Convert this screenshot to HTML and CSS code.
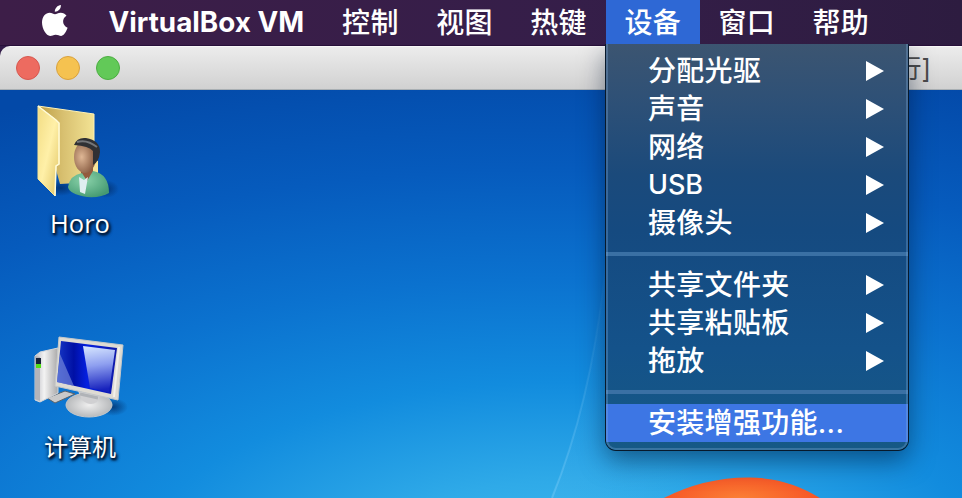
FILE: index.html
```html
<!DOCTYPE html>
<html lang="zh-CN">
<head>
<meta charset="utf-8">
<title>VirtualBox VM</title>
<link rel="stylesheet" href="styles.css">
</head>
<body>
<div class="screen">
  <nav class="menubar">
    <svg class="apple" width="28" height="34" viewBox="0 0 28 34" aria-hidden="true">
      <path d="M19.900 1c.2 3.800-2.600 6.600-6.100 6.700C13.700 4.300 16.500 1.300 19.900 1z"/>
      <path d="M14 10.200c1.500 0 3.100-1.500 5.700-1.500 2.400 0 4.500 1.200 5.800 3.100-5 3-4.300 9.700 1.100 12-.8 2.500-3.500 8.100-6.400 8.100-2.100 0-3-1.200-5.500-1.200S11.200 32 9.200 32C5.200 32 1 24.600 1 18.600 1 12.500 4.800 8.800 8.600 8.800c2.300 0 4 1.400 5.400 1.400z"/>
    </svg>
    <span class="menubar-item app-name">VirtualBox VM</span>
    <span class="menubar-item">控制</span>
    <span class="menubar-item">视图</span>
    <span class="menubar-item">热键</span>
    <span class="menubar-item active">设备</span>
    <span class="menubar-item">窗口</span>
    <span class="menubar-item">帮助</span>
  </nav>

  <main class="window">
    <header class="titlebar">
      <i class="light close"></i><i class="light minimize"></i><i class="light maximize"></i>
      <span class="window-title">行]</span>
    </header>
    <section class="desktop">
      <svg class="wallpaper" width="962" height="408" viewBox="0 0 962 408" aria-hidden="true">
        <defs>
          <linearGradient id="beam" x1="0" y1="0" x2="0" y2="1"><stop stop-color="#9fdcff" stop-opacity="0"/><stop offset="1" stop-color="#9fdcff" stop-opacity=".28"/></linearGradient>
          <linearGradient id="haze" x1="0" y1="0" x2="1" y2="0"><stop stop-color="#8fd0ff" stop-opacity=".06"/><stop offset="1" stop-color="#8fd0ff" stop-opacity="0"/></linearGradient>
          <radialGradient id="flag" cx=".5" cy=".35" r=".5"><stop stop-color="#fb8135"/><stop offset="1" stop-color="#f64a22"/></radialGradient>
        </defs>
        <path d="M552 408Q595 300 605 170L700 120V408z" fill="url(#haze)"/>
        <path d="M552 408Q590 315 604 190" fill="none" stroke="url(#beam)" stroke-width="2"/>
        <path d="M660 410Q703 387 750 387.500 790 388 823 410L840 450H640z" fill="url(#flag)"/>
      </svg>
      <div class="icons">
        <figure class="icon">
          <svg width="84" height="96" viewBox="0 0 84 96" aria-hidden="true">
            <defs>
              <linearGradient id="folderBack" x1="0" y1="0" x2="1" y2="0"><stop stop-color="#bd9e45"/><stop offset=".45" stop-color="#d8c070"/><stop offset="1" stop-color="#f3e394"/></linearGradient>
              <linearGradient id="folderFront" x1="0" y1="0" x2="1" y2="1"><stop stop-color="#f2dc83"/><stop offset=".5" stop-color="#fff0a8"/><stop offset="1" stop-color="#e0c363"/></linearGradient>
              <radialGradient id="face" cx=".35" cy=".5" r=".65"><stop stop-color="#dfb795"/><stop offset="1" stop-color="#81553c"/></radialGradient>
              <radialGradient id="shirt" cx=".4" cy=".35" r=".7"><stop stop-color="#8bd3aa"/><stop offset="1" stop-color="#459a72"/></radialGradient>
              <radialGradient id="shade"><stop stop-color="#022a63" stop-opacity=".75"/><stop offset="1" stop-color="#022a63" stop-opacity="0"/></radialGradient>
            </defs>
            <ellipse cx="70" cy="85" rx="13" ry="9" fill="url(#shade)"/>
            <ellipse cx="25" cy="84" rx="15" ry="8" fill="url(#shade)"/>
            <path d="M2 2L58 10V78L24 80z" fill="url(#folderBack)"/>
            <path d="M2 2L58 10V60" fill="none" stroke="#fff1b4"/>
            <path d="M57 55L62 57V78L56 80z" fill="#f7e59a"/>
            <path d="M2 2L20 16 23 19V60L20 62 19 92 2 75z" fill="url(#folderFront)" stroke="#f7e596"/>
            <path d="M2 2L20 16 23 19V60L20 62 19 92" fill="none" stroke="#fffbd8" stroke-width="1.500"/>
            <path d="M45 63h12v17H45z" fill="#935b3e"/>
            <path d="M32 83Q34 71 46 69L51 77 57 67Q73 70 73 89 65 94 51 93 33 90 32 83z" fill="url(#shirt)"/>
            <path d="M43 73L48 76 52 73 49 90 44 88z" fill="#dfeef0"/>
            <ellipse cx="49" cy="53" rx="11" ry="16" fill="url(#face)"/>
            <path d="M38 41Q41 33 50 34 64 36 64 48 63 58 57 61L57 47Q53 42 38 41z" fill="#303033"/>
            <path d="M41 38Q51 35 61 43" fill="none" stroke="#747578" stroke-width="2"/>
          </svg>
          <figcaption class="latin">Horo</figcaption>
        </figure>
        <figure class="icon computer">
          <svg width="96" height="86" viewBox="0 0 96 86" aria-hidden="true">
            <defs>
              <linearGradient id="tower"><stop stop-color="#bcbcc3"/><stop offset=".4" stop-color="#f3f3f3"/><stop offset="1" stop-color="#aaa9a9"/></linearGradient>
              <linearGradient id="panel"><stop stop-color="#1738c5"/><stop offset=".28" stop-color="#0010a5"/><stop offset=".5" stop-color="#0420e0"/><stop offset="1" stop-color="#1019a8"/></linearGradient>
              <linearGradient id="glare" x1="0" y1="0" x2=".1" y2="1"><stop stop-color="#d9e8ff"/><stop offset=".45" stop-color="#8fa0f0"/><stop offset="1" stop-color="#1722bd"/></linearGradient>
              <radialGradient id="base"><stop stop-color="#efefef"/><stop offset="1" stop-color="#b8babc"/></radialGradient>
            </defs>
            <ellipse cx="81" cy="73" rx="15" ry="9" fill="url(#shade)"/>
            <path d="M15 64L33 57 43 60 23 69z" fill="#c9c9c9" stroke="#59636c"/>
            <path d="M3 22L8 18 26 14V59L8 68 3 66z" fill="url(#tower)" stroke="#d7d8da"/>
            <path d="M3 22L8 23V67L3 65z" fill="#b4b4ba"/>
            <path d="M4 24h5v6H4z" fill="#172238"/>
            <path d="M4 30h5v4H4z" fill="#54df18"/>
            <ellipse cx="57" cy="71" rx="23" ry="12" fill="url(#base)" stroke="#c5c8cb"/>
            <path d="M46 57L68 62 65 68Q58 73 50 66z" fill="#d0d0d2"/>
            <path d="M48 60L66 64" stroke="#b0b3b7" stroke-width="3"/>
            <path d="M27 3L91 11 86 66 23 52z" fill="#dedbd3" stroke="#c5c8ca"/>
            <path d="M29 7L85 14 79 60 25 48z" fill="url(#panel)"/>
            <path d="M51 12L83 16 77 58 58 54z" fill="url(#glare)"/>
            <path d="M28 20L42 52 25 48z" fill="#8294e0" opacity=".6"/>
            <path d="M87 13L82 63" stroke="#f2f0eb" stroke-width="2"/>
          </svg>
          <figcaption>计算机</figcaption>
        </figure>
      </div>
    </section>
  </main>

  <div class="dropdown">
    <div class="row">分配光驱<i class="arrow"></i></div>
    <div class="row">声音<i class="arrow"></i></div>
    <div class="row">网络<i class="arrow"></i></div>
    <div class="row"><span class="usb">USB</span><i class="arrow"></i></div>
    <div class="row">摄像头<i class="arrow"></i></div>
    <div class="separator"></div>
    <div class="row">共享文件夹<i class="arrow"></i></div>
    <div class="row">共享粘贴板<i class="arrow"></i></div>
    <div class="row">拖放<i class="arrow"></i></div>
    <div class="separator"></div>
    <div class="row selected">安装增强功能...</div>
  </div>
</div>
</body>
</html>
```
FILE: styles.css
```css
* { box-sizing: border-box; }
body { margin: 0; font-family: Inter, "Noto Sans CJK SC", sans-serif; color: #fff; }
.screen {
  position: relative;
  display: flex;
  flex-direction: column;
  width: 962px;
  height: 498px;
  overflow: hidden;
  background: #331c49;
}
.menubar {
  display: flex;
  align-items: flex-start;
  height: 46px;
  flex: none;
  padding-left: 41px;
  background: linear-gradient(90deg, #3d1e48, #351e49 60%, #2d1c40);
  border-bottom: 1px solid #28103a;
}
.apple { flex: none; margin: 4px 21px 0 0; fill: #fff; }
.menubar-item {
  flex: none;
  width: 94.100px;
  height: 44px;
  padding-left: 18.500px;
  font-size: 28px;
  font-weight: 500;
  line-height: 46px;
  letter-spacing: .3px;
  white-space: nowrap;
}
.app-name { width: 233.600px; font-size: 27.800px; font-weight: 700; line-height: 44px; letter-spacing: 0; }
.active { background: #2e68d5; }

.window { flex: 1; display: flex; flex-direction: column; border-radius: 10px 0 0; overflow: hidden; }
.titlebar {
  display: flex;
  align-items: center;
  gap: 16px;
  height: 44px;
  flex: none;
  padding: 0 31px 0 16px;
  background: linear-gradient(#ececec, #d1d1d1);
  border-top: 1px solid #f8f8f8;
  border-bottom: 1px solid #a9afb3;
}
.light { width: 24px; height: 24px; border-radius: 50%; border: 1px solid; }
.close { background: #ed6b60; border-color: #d65850; }
.minimize { background: #f5c250; border-color: #d8a13e; }
.maximize { background: #62c958; border-color: #4cae42; }
.window-title { margin-left: auto; padding-top: 2px; font-size: 26px; line-height: 40px; color: #4b4b4b; }

.desktop {
  position: relative;
  flex: 1;
  background: radial-gradient(ellipse 1180px 520px at 560px 480px, #40bdf0 0%, #2faae8 17%, #128cde 36%, #0b72cf 56%, #065bbd 77%, #0349a8 100%);
}
.wallpaper { position: absolute; inset: 0; }
.icons { position: relative; display: flex; flex-direction: column; width: 160px; padding-top: 14px; }
.icon { display: flex; flex-direction: column; align-items: center; height: 230px; margin: 0; }
.icon svg { flex: none; margin-right: 4px; }
.computer svg { margin-right: 0; }
figcaption {
  margin-top: 10px;
  font-family: "Noto Sans CJK SC", sans-serif;
  font-size: 24px;
  line-height: 32px;
  text-shadow: 1px 2px 2px #001a3a, 2px 2px 3px #001a3a, 0 1px 4px #001a3a;
}
.latin { margin-top: 7px; font-family: "Open Sans", sans-serif; font-size: 25.500px; }

.dropdown {
  position: absolute;
  left: 606px;
  top: 44px;
  width: 302px;
  height: 406px;
  padding: 8px 0;
  overflow: hidden;
  border-radius: 0 0 10px 10px;
  background: linear-gradient(#3c5571, #2d5077 15%, #1b4a7b 32%, #154a80 46%, #14528a 75%, #165985);
  box-shadow: 0 0 0 1px #07192b, 0 10px 26px rgba(0, 20, 45, .5);
  clip-path: inset(0 -50px -60px -50px);
}
.dropdown::after {
  content: "";
  position: absolute;
  inset: 0;
  border: 2px solid rgba(135, 180, 225, .3);
  border-top: 0;
  border-radius: 0 0 10px 10px;
}
.row {
  display: flex;
  align-items: center;
  justify-content: space-between;
  height: 38px;
  padding: 0 24px 0 42px;
  font-size: 28px;
  font-weight: 500;
  line-height: 38px;
  letter-spacing: .3px;
  white-space: nowrap;
}
.usb { font-size: 27px; letter-spacing: -.1px; }
.arrow { width: 18px; height: 20px; background: #fff; clip-path: polygon(0 0, 100% 50%, 0 100%); }
.separator { height: 4px; margin: 10px 0; background: #3a70a4; }
.selected { background: #3d76e4; }
```
